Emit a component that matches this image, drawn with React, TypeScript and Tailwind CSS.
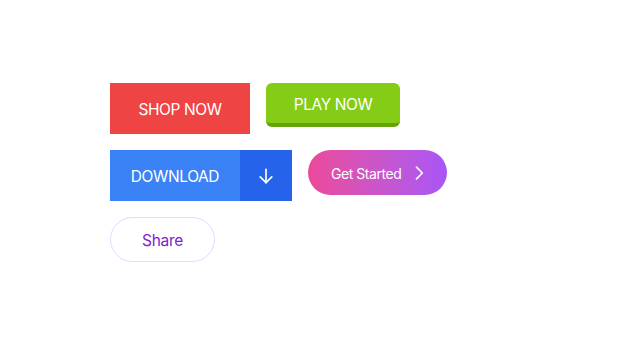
import React from "react";

export default function App() {
  return (
    <div
      className="w-[640px] h-[344px] bg-white pl-[110px] pt-[83px] flex flex-col gap-4"
      style={{ fontFamily: "Inter, 'Noto Sans', sans-serif" }}
    >
      <div className="flex items-start gap-4">
        <button className="w-[140px] h-[51px] bg-[#ef4444] text-white text-[15.5px] tracking-[-0.4px] flex items-center justify-center pt-[3px]">
          SHOP NOW
        </button>
        <button className="w-[134px] h-[44px] bg-[#84cc16] border-b-4 border-[#65a30d] rounded-md text-white text-[15.5px] tracking-[-0.4px] flex items-center justify-center pt-[3px]">
          PLAY NOW
        </button>
      </div>
      <div className="flex items-start gap-4">
        <div className="flex h-[51px]">
          <button className="w-[130px] h-full bg-[#3b82f6] text-white text-[15.5px] tracking-[-0.4px] flex items-center justify-center pt-[3px]">
            DOWNLOAD
          </button>
          <button className="w-[52px] h-full bg-[#2563eb] text-white flex items-center justify-center">
            <svg width="20" height="20" viewBox="0 0 24 24" fill="none" stroke="currentColor" strokeWidth="2" strokeLinecap="round" strokeLinejoin="round">
              <path d="M12 4v16" />
              <path d="M5 13l7 7 7-7" />
            </svg>
          </button>
        </div>
        <button className="w-[139px] h-[45px] rounded-full bg-gradient-to-r from-[#ec4899] to-[#a855f7] text-white text-[14px] tracking-[-0.45px] flex items-center pl-[23px] gap-[8px] pt-[1px]">
          <span>Get Started</span>
          <svg width="20" height="20" viewBox="0 0 24 24" fill="none" stroke="currentColor" strokeWidth="2" strokeLinecap="round" strokeLinejoin="round">
            <path d="M9 5l7 7-7 7" />
          </svg>
        </button>
      </div>
      <div className="flex">
        <button className="w-[105px] h-[45px] rounded-full border border-[#e9d5ff] text-[#7e22ce] text-[15.5px] tracking-[-0.3px] flex items-center justify-center pt-[3px]">
          Share
        </button>
      </div>
    </div>
  );
}
